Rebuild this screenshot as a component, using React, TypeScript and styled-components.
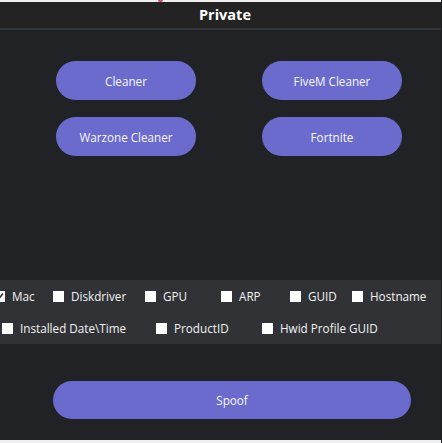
import React from "react";
import styled, { createGlobalStyle } from "styled-components";

const Global = createGlobalStyle`
  html, body { margin: 0; padding: 0; background: #f0f0f0; }
  body { font-family: "Open Sans", "Liberation Sans", sans-serif; }
  * { box-sizing: border-box; }
`;

const Window = styled.div`
  width: 442px;
  height: 443px;
  display: flex;
  flex-direction: column;
  background: #212226;
  overflow: hidden;
  border-right: 1px solid #1c1d20;
`;

const TopStrip = styled.div`
  height: 2px;
  flex: none;
  background: #f0f0f0;
  display: flex;
`;

const RedDot = styled.div`
  width: 5px;
  height: 2px;
  margin-left: 158px;
  background: #d94a62;
  border-radius: 0 0 3px 3px;
`;

const Header = styled.div`
  height: 28px;
  flex: none;
  background: #232323;
  border-bottom: 2px solid #35363a;
  display: flex;
  align-items: center;
  justify-content: center;
  padding-left: 9px;
  padding-bottom: 2px;
  color: #ffffff;
  font-weight: 700;
  font-size: 14.5px;
`;

const ButtonGrid = styled.div`
  display: grid;
  grid-template-columns: 140px 140px;
  grid-auto-rows: 39px;
  column-gap: 66px;
  row-gap: 17px;
  margin: 31px 0 0 56px;
`;

const PillButton = styled.button<{ $w?: number; $h?: number }>`
  width: ${(p) => (p.$w ? `${p.$w}px` : "100%")};
  height: ${(p) => (p.$h ? `${p.$h}px` : "100%")};
  border: none;
  border-radius: 20px;
  background: #6b6bcd;
  color: #f6f6fc;
  font-family: "Open Sans", "Liberation Sans", sans-serif;
  font-size: 11.7px;
  padding: 0;
  display: flex;
  align-items: center;
  justify-content: center;
  cursor: pointer;
`;

const Panel = styled.div`
  margin-top: 124px;
  height: 64px;
  flex: none;
  background: #313236;
  display: flex;
  flex-direction: column;
`;

const CheckRow = styled.div<{ $offset: number }>`
  height: 32px;
  display: flex;
  align-items: center;
  margin-left: ${(p) => p.$offset}px;
`;

const CheckItem = styled.label<{ $w?: number }>`
  display: flex;
  align-items: center;
  gap: 7px;
  flex: none;
  width: ${(p) => (p.$w ? `${p.$w}px` : "auto")};
  color: #f2f2f2;
  font-size: 11.7px;
  white-space: nowrap;
`;

const Box = styled.span`
  width: 11px;
  height: 11px;
  flex: none;
  background: #ffffff;
  display: flex;
  align-items: center;
  justify-content: center;
`;

const SpoofWrap = styled.div`
  margin: 37px 0 0 53px;
`;

const Filler = styled.div`
  flex: 1;
`;

const BottomStrip = styled.div`
  height: 3px;
  flex: none;
  background: #f0f0f0;
`;

function Check({ label, w, checked }: { label: string; w?: number; checked?: boolean }) {
  return (
    <CheckItem $w={w}>
      <Box>
        {checked && (
          <svg width="9" height="9" viewBox="0 0 9 9">
            <path d="M1 4.5 L3.5 7 L8 1.5" fill="none" stroke="#333" strokeWidth="1.6" />
          </svg>
        )}
      </Box>
      {label}
    </CheckItem>
  );
}

export default function App() {
  return (
    <>
      <Global />
      <Window>
        <TopStrip>
          <RedDot />
        </TopStrip>
        <Header>Private</Header>
        <ButtonGrid>
          <PillButton>Cleaner</PillButton>
          <PillButton>FiveM Cleaner</PillButton>
          <PillButton>Warzone Cleaner</PillButton>
          <PillButton>Fortnite</PillButton>
        </ButtonGrid>
        <Panel>
          <CheckRow $offset={-6}>
            <Check label="Mac" w={59} checked />
            <Check label="Diskdriver" w={92} />
            <Check label="GPU" w={76} />
            <Check label="ARP" w={69} />
            <Check label="GUID" w={62} />
            <Check label="Hostname" />
          </CheckRow>
          <CheckRow $offset={2}>
            <Check label="Installed Date\Time" w={154} />
            <Check label="ProductID" w={106} />
            <Check label="Hwid Profile GUID" />
          </CheckRow>
        </Panel>
        <SpoofWrap>
          <PillButton $w={358} $h={38}>Spoof</PillButton>
        </SpoofWrap>
        <Filler />
        <BottomStrip />
      </Window>
    </>
  );
}
